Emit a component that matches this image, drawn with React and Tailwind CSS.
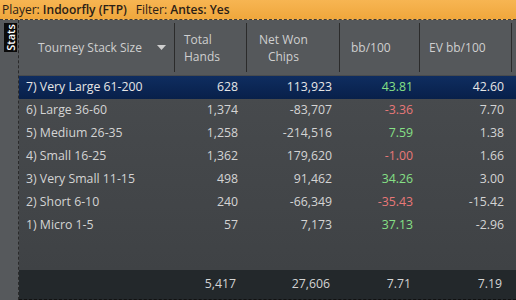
import React from "react";

const rows = [
  { name: "7) Very Large 61-200", hands: "628", chips: "113,923", bb: "43.81", ev: "42.60", pos: true },
  { name: "6) Large 36-60", hands: "1,374", chips: "-83,707", bb: "-3.36", ev: "7.70", pos: false },
  { name: "5) Medium 26-35", hands: "1,258", chips: "-214,516", bb: "7.59", ev: "1.38", pos: true },
  { name: "4) Small 16-25", hands: "1,362", chips: "179,620", bb: "-1.00", ev: "1.66", pos: false },
  { name: "3) Very Small 11-15", hands: "498", chips: "91,462", bb: "34.26", ev: "3.00", pos: true },
  { name: "2) Short 6-10", hands: "240", chips: "-66,349", bb: "-35.43", ev: "-15.42", pos: false },
  { name: "1) Micro 1-5", hands: "57", chips: "7,173", bb: "37.13", ev: "-2.96", pos: true },
];

const cols = "grid grid-cols-[156px_72px_93px_80px_92px]";

export default function App() {
  return (
    <div className="w-[516px] h-[300px] overflow-hidden bg-[#2a2d30] text-[12.3px] text-[#d4d4d4] font-['Open_Sans',sans-serif] flex flex-col">
      {/* filter bar */}
      <div className="h-[20px] shrink-0 bg-gradient-to-b from-[#f7b552] to-[#efa73c] text-[#2a2016] text-[12px] leading-[20px] pl-[2px] border-b border-dashed border-[#3a3a3a]">
        Player: <span className="font-semibold">Indoorfly (FTP)</span>
        <span className="ml-[9px]">Filter: </span>
        <span className="font-semibold">Antes: Yes</span>
      </div>

      <div className="flex flex-1 min-h-0">
        {/* side strip */}
        <div className="w-[19px] shrink-0 bg-[#56595c] border-r border-dashed border-[#2a2a2a] pt-[3px] pl-[4px]">
          <div className="w-[13px] h-[29px] bg-[#0b0b0b] flex items-center justify-center">
            <span className="-rotate-90 text-[11px] font-semibold text-white leading-none">Stats</span>
          </div>
        </div>

        {/* table */}
        <div className="flex-1 flex flex-col min-w-0">
          <div className={`${cols} h-[55px] shrink-0 bg-[#55585b] text-[#cfcfcf] text-[12px]`}>
            <div className="flex items-center pl-[19px] pr-[8px] py-[3px] border-r border-[#2b2b2b] my-[3px]">
              <span className="flex-1">Tourney Stack Size</span>
              <svg width="9" height="5" viewBox="0 0 9 5">
                <path d="M0 0h9L4.5 5z" fill="#cfcfcf" />
              </svg>
            </div>
            <div className="flex items-center pl-[9px] leading-[17px] border-r border-[#2b2b2b] my-[3px]">
              Total<br />Hands
            </div>
            <div className="flex items-center pl-[12px] leading-[17px] border-r border-[#2b2b2b] my-[3px]">
              <span className="text-center">Net Won<br />Chips</span>
            </div>
            <div className="flex items-center pl-[11px] border-r border-[#2b2b2b] my-[3px]">bb/100</div>
            <div className="flex items-center pl-[9px] border-r border-[#2b2b2b] my-[3px]">EV bb/100</div>
          </div>

          <div className="flex-1 bg-gradient-to-b from-[#484b4e] to-[#3f4245] pt-[1px]">
            {rows.map((r, i) => (
              <div
                key={i}
                className={`${cols} h-[23px] items-center ${
                  i === 0 ? "bg-gradient-to-b from-[#0f2d60] to-[#08204a] text-[#e6e6e6]" : ""
                }`}
              >
                <div className="pl-[7px]">{r.name}</div>
                <div className="text-right pr-[9px]">{r.hands}</div>
                <div className="text-right pr-[8px]">{r.chips}</div>
                <div className={`text-right pr-[7px] ${r.pos ? "text-[#86e086]" : "text-[#e87878]"}`}>{r.bb}</div>
                <div className="text-right pr-[8px]">{r.ev}</div>
              </div>
            ))}
          </div>

          <div className={`${cols} h-[30px] shrink-0 bg-[#23282b] items-center border-b border-dashed border-[#111]`}>
            <div />
            <div className="text-right pr-[11px]">5,417</div>
            <div className="text-right pr-[10px]">27,606</div>
            <div className="text-right pr-[9px]">7.71</div>
            <div className="text-right pr-[10px]">7.19</div>
          </div>
        </div>
      </div>
    </div>
  );
}
